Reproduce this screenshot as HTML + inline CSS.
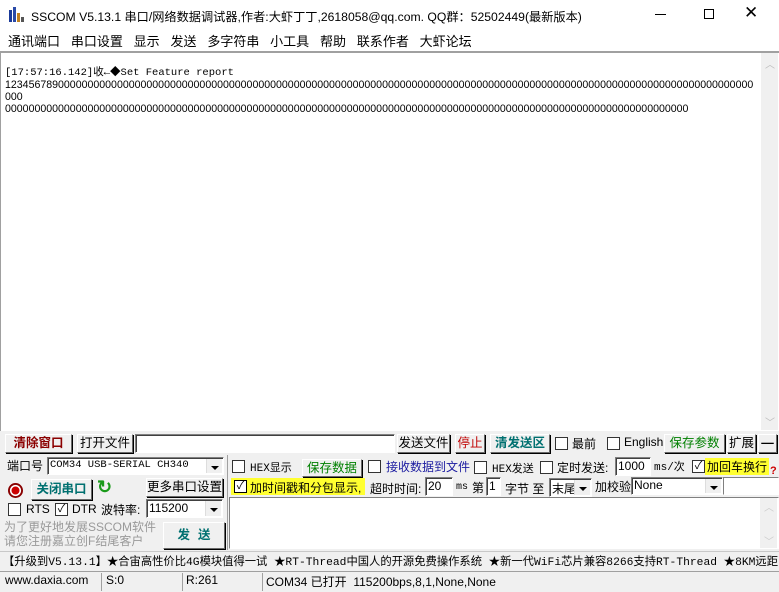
<!DOCTYPE html>
<html><head><meta charset="utf-8"><style>
*{margin:0;padding:0;box-sizing:border-box}
body{width:779px;height:592px;background:#f0f0f0;position:relative;overflow:hidden;font-family:"Liberation Sans","Noto Sans CJK SC",sans-serif;font-size:12px;color:#000}
.a{position:absolute;white-space:nowrap}
.btn{position:absolute;background:#f0f0f0;border:1px solid;border-color:#fff #696969 #696969 #fff;box-shadow:1px 1px 0 #000;text-align:center;line-height:17px;font-size:12.5px}
.in{position:absolute;background:#fff;border:1px solid #7a7a7a;border-color:#808080 #fff #fff #808080;box-shadow:inset 1px 1px 0 #404040}
.cb{position:absolute;width:13px;height:13px;background:#fff;border:1px solid #333;font-size:11px;line-height:11px;text-align:center}
.dd{position:absolute;right:1px;top:1px;bottom:1px;width:16px;background:#f0f0f0;border-left:1px solid #ddd}
.dd:after{content:"";position:absolute;left:4px;top:7px;border:4px solid transparent;border-top:4px solid #000;border-bottom:0}
.mono{font-family:"Liberation Mono","Noto Sans CJK SC",monospace}
</style></head><body>
<div class="a" style="left:0;top:0;width:779px;height:30px;background:#fff"></div>
<svg class="a" style="left:9px;top:7px" width="16" height="16"><rect x="0" y="3" width="3" height="12" fill="#1a3a9a"/><rect x="4" y="0" width="3" height="15" fill="#2a4aa8"/><rect x="8" y="6" width="3" height="9" fill="#c08020"/><rect x="12" y="10" width="3" height="5" fill="#555"/></svg>
<div class="a" style="left:31px;top:7px;font-size:12.2px">SSCOM V5.13.1 串口/网络数据调试器,作者:大虾丁丁,2618058@qq.com. QQ群：52502449(最新版本)</div>
<div class="a" style="left:655px;top:14px;width:11px;height:1px;background:#000"></div>
<div class="a" style="left:704px;top:9px;width:10px;height:10px;border:1px solid #000"></div>
<div class="a" style="left:744px;top:3px;font-size:17px;line-height:20px">✕</div>
<div class="a" style="left:0;top:30px;width:779px;height:21px;background:#fff"></div>
<div class="a" style="left:8px;top:31px;font-size:13px">通讯端口&nbsp;&nbsp;&nbsp;串口设置&nbsp;&nbsp;&nbsp;显示&nbsp;&nbsp;&nbsp;发送&nbsp;&nbsp;&nbsp;多字符串&nbsp;&nbsp;&nbsp;小工具&nbsp;&nbsp;&nbsp;帮助&nbsp;&nbsp;&nbsp;联系作者&nbsp;&nbsp;&nbsp;大虾论坛</div>
<div class="a" style="left:0;top:51px;width:779px;height:380px;background:#fff;border-top:2px solid #a0a0a0;border-left:1px solid #a0a0a0"></div>
<div class="a" style="left:761px;top:53px;width:17px;height:377px;background:#f0f0f0"></div>
<div class="a" style="left:765px;top:56px;color:#bbb;font-size:10px">︿</div>
<div class="a" style="left:765px;top:414px;color:#bbb;font-size:10px">﹀</div>
<div class="a mono" style="left:5px;top:67px;font-size:10.5px;line-height:12px">[17:57:16.142]收←◆Set Feature report</div>
<div class="a" style="left:5px;top:79px;width:752px;overflow:hidden;font-size:10.6px;line-height:12px">1234567890000000000000000000000000000000000000000000000000000000000000000000000000000000000000000000000000000000000000000000000<br>000<br>00000000000000000000000000000000000000000000000000000000000000000000000000000000000000000000000000000000000000000000</div>
<div class="btn" style="left:5px;top:434px;width:67px;height:19px;color:#8b0000;font-weight:bold">清除窗口</div>
<div class="btn" style="left:77px;top:434px;width:56px;height:19px">打开文件</div>
<div class="in" style="left:135px;top:434px;width:260px;height:19px"></div>
<div class="btn" style="left:397px;top:434px;width:53px;height:19px">发送文件</div>
<div class="btn" style="left:455px;top:434px;width:30px;height:19px;color:#c00000">停止</div>
<div class="btn" style="left:490px;top:434px;width:60px;height:19px;color:#007070;font-weight:bold">清发送区</div>
<div class="cb" style="left:555px;top:437px"></div><div class="a" style="left:572px;top:435px">最前</div>
<div class="cb" style="left:607px;top:437px"></div><div class="a" style="left:624px;top:435px">English</div>
<div class="btn" style="left:664px;top:434px;width:61px;height:19px;color:#008000">保存参数</div>
<div class="btn" style="left:727px;top:434px;width:29px;height:19px">扩展</div>
<div class="btn" style="left:758px;top:434px;width:19px;height:19px;font-weight:bold">—</div>
<div class="a" style="left:0;top:455px;width:228px;height:95px;border-right:1px solid #a0a0a0"></div>
<div class="a" style="left:7px;top:457px">端口号</div>
<div class="in" style="left:47px;top:457px;width:177px;height:18px"><span class="a mono" style="left:2px;top:1px;font-size:10.5px">COM34 USB-SERIAL CH340</span><div class="dd"></div></div>
<div class="a" style="left:8px;top:483px;width:15px;height:15px;border-radius:50%;background:radial-gradient(circle,#c00 0,#c00 35%,#fff 40%,#fff 50%,#800 55%)"></div>
<div class="btn" style="left:31px;top:479px;width:61px;height:21px;line-height:19px;color:#007070;font-weight:bold">关闭串口</div>
<div class="a" style="left:97px;top:477px;color:#1a9a1a;font-size:18px;font-weight:bold">↻</div>
<div class="btn" style="left:146px;top:478px;width:77px;height:19px">更多串口设置</div>
<div class="cb" style="left:8px;top:503px"></div><div class="a" style="left:26px;top:502px">RTS</div>
<div class="cb" style="left:55px;top:503px">✓</div><div class="a" style="left:72px;top:502px">DTR</div>
<div class="a" style="left:101px;top:501px">波特率:</div>
<div class="in" style="left:146px;top:499px;width:77px;height:19px"><span class="a" style="left:2px;top:1px">115200</span><div class="dd"></div></div>
<div class="a" style="left:4px;top:520px;color:#999;line-height:14px">为了更好地发展SSCOM软件<br>请您注册嘉立创F结尾客户</div>
<div class="btn" style="left:163px;top:522px;width:62px;height:27px;line-height:25px;color:#007070;font-weight:bold;letter-spacing:8px;padding-left:8px">发送</div>
<div class="cb" style="left:232px;top:460px"></div><div class="a mono" style="left:250px;top:459px;font-size:11px">HEX显示</div>
<div class="btn" style="left:302px;top:459px;width:60px;height:18px;color:#008000">保存数据</div>
<div class="cb" style="left:368px;top:460px"></div><div class="a" style="left:386px;top:458px;color:#1a1aa0">接收数据到文件</div>
<div class="cb" style="left:474px;top:461px"></div><div class="a mono" style="left:492px;top:460px;font-size:11px">HEX发送</div>
<div class="cb" style="left:540px;top:461px"></div><div class="a" style="left:557px;top:459px">定时发送:</div>
<div class="in" style="left:615px;top:457px;width:36px;height:19px"><span class="a" style="left:2px;top:1px">1000</span></div>
<div class="a mono" style="left:654px;top:458px;font-size:11px">ms/次</div>
<div class="cb" style="left:692px;top:460px">✓</div>
<div class="a" style="left:705px;top:458px;width:64px;height:17px;background:#ffff30;padding-left:2px">加回车换行</div>
<div class="a" style="left:770px;top:465px;color:#c00;font-weight:bold;font-size:11px">?</div>
<div class="a" style="left:231px;top:478px;width:134px;height:17px;background:#ffff30"></div>
<div class="cb" style="left:234px;top:480px;border-color:#000">✓</div><div class="a" style="left:250px;top:479px">加时间戳和分包显示,</div>
<div class="a" style="left:370px;top:480px">超时时间:</div>
<div class="in" style="left:425px;top:477px;width:28px;height:19px"><span class="a" style="left:2px;top:1px">20</span></div>
<div class="a mono" style="left:456px;top:482px;font-size:10px">ms</div>
<div class="a" style="left:472px;top:479px">第</div>
<div class="in" style="left:486px;top:477px;width:15px;height:19px"><span class="a" style="left:2px;top:1px">1</span></div>
<div class="a" style="left:505px;top:480px">字节 至</div>
<div class="in" style="left:549px;top:478px;width:43px;height:19px"><span class="a" style="left:2px;top:1px">末尾</span><div class="dd"></div></div>
<div class="a" style="left:595px;top:478px">加校验</div>
<div class="in" style="left:631px;top:477px;width:92px;height:18px"><span class="a" style="left:2px;top:0">None</span><div class="dd"></div></div>
<div class="in" style="left:723px;top:477px;width:56px;height:18px;box-shadow:none"></div>
<div class="in" style="left:229px;top:497px;width:550px;height:52px;box-shadow:none"></div>
<div class="a" style="left:760px;top:498px;width:17px;height:50px;background:#f0f0f0"></div>
<div class="a" style="left:764px;top:499px;color:#ccc;font-size:10px">︿</div>
<div class="a" style="left:764px;top:533px;color:#ccc;font-size:10px">﹀</div>
<div class="a" style="left:0;top:551px;width:779px;height:19px;border-top:1px solid #c8c8c8"></div>
<div class="a mono" style="left:3px;top:553px;font-size:11.3px">【升级到V5.13.1】★合宙高性价比4G模块值得一试 ★RT-Thread中国人的开源免费操作系统 ★新一代WiFi芯片兼容8266支持RT-Thread ★8KM远距</div>
<div class="a" style="left:0;top:571px;width:779px;height:21px;border-top:1px solid #a0a0a0"></div>
<div class="a" style="left:3px;top:573px;width:99px;height:18px;border-right:1px solid #a0a0a0;padding-left:2px">www.daxia.com</div>
<div class="a" style="left:104px;top:573px;width:79px;height:18px;border-right:1px solid #a0a0a0;padding-left:2px">S:0</div>
<div class="a" style="left:184px;top:573px;width:79px;height:18px;border-right:1px solid #a0a0a0;padding-left:2px">R:261</div>
<div class="a" style="left:266px;top:573px">COM34 已打开&nbsp; 115200bps,8,1,None,None</div>
</body></html>
